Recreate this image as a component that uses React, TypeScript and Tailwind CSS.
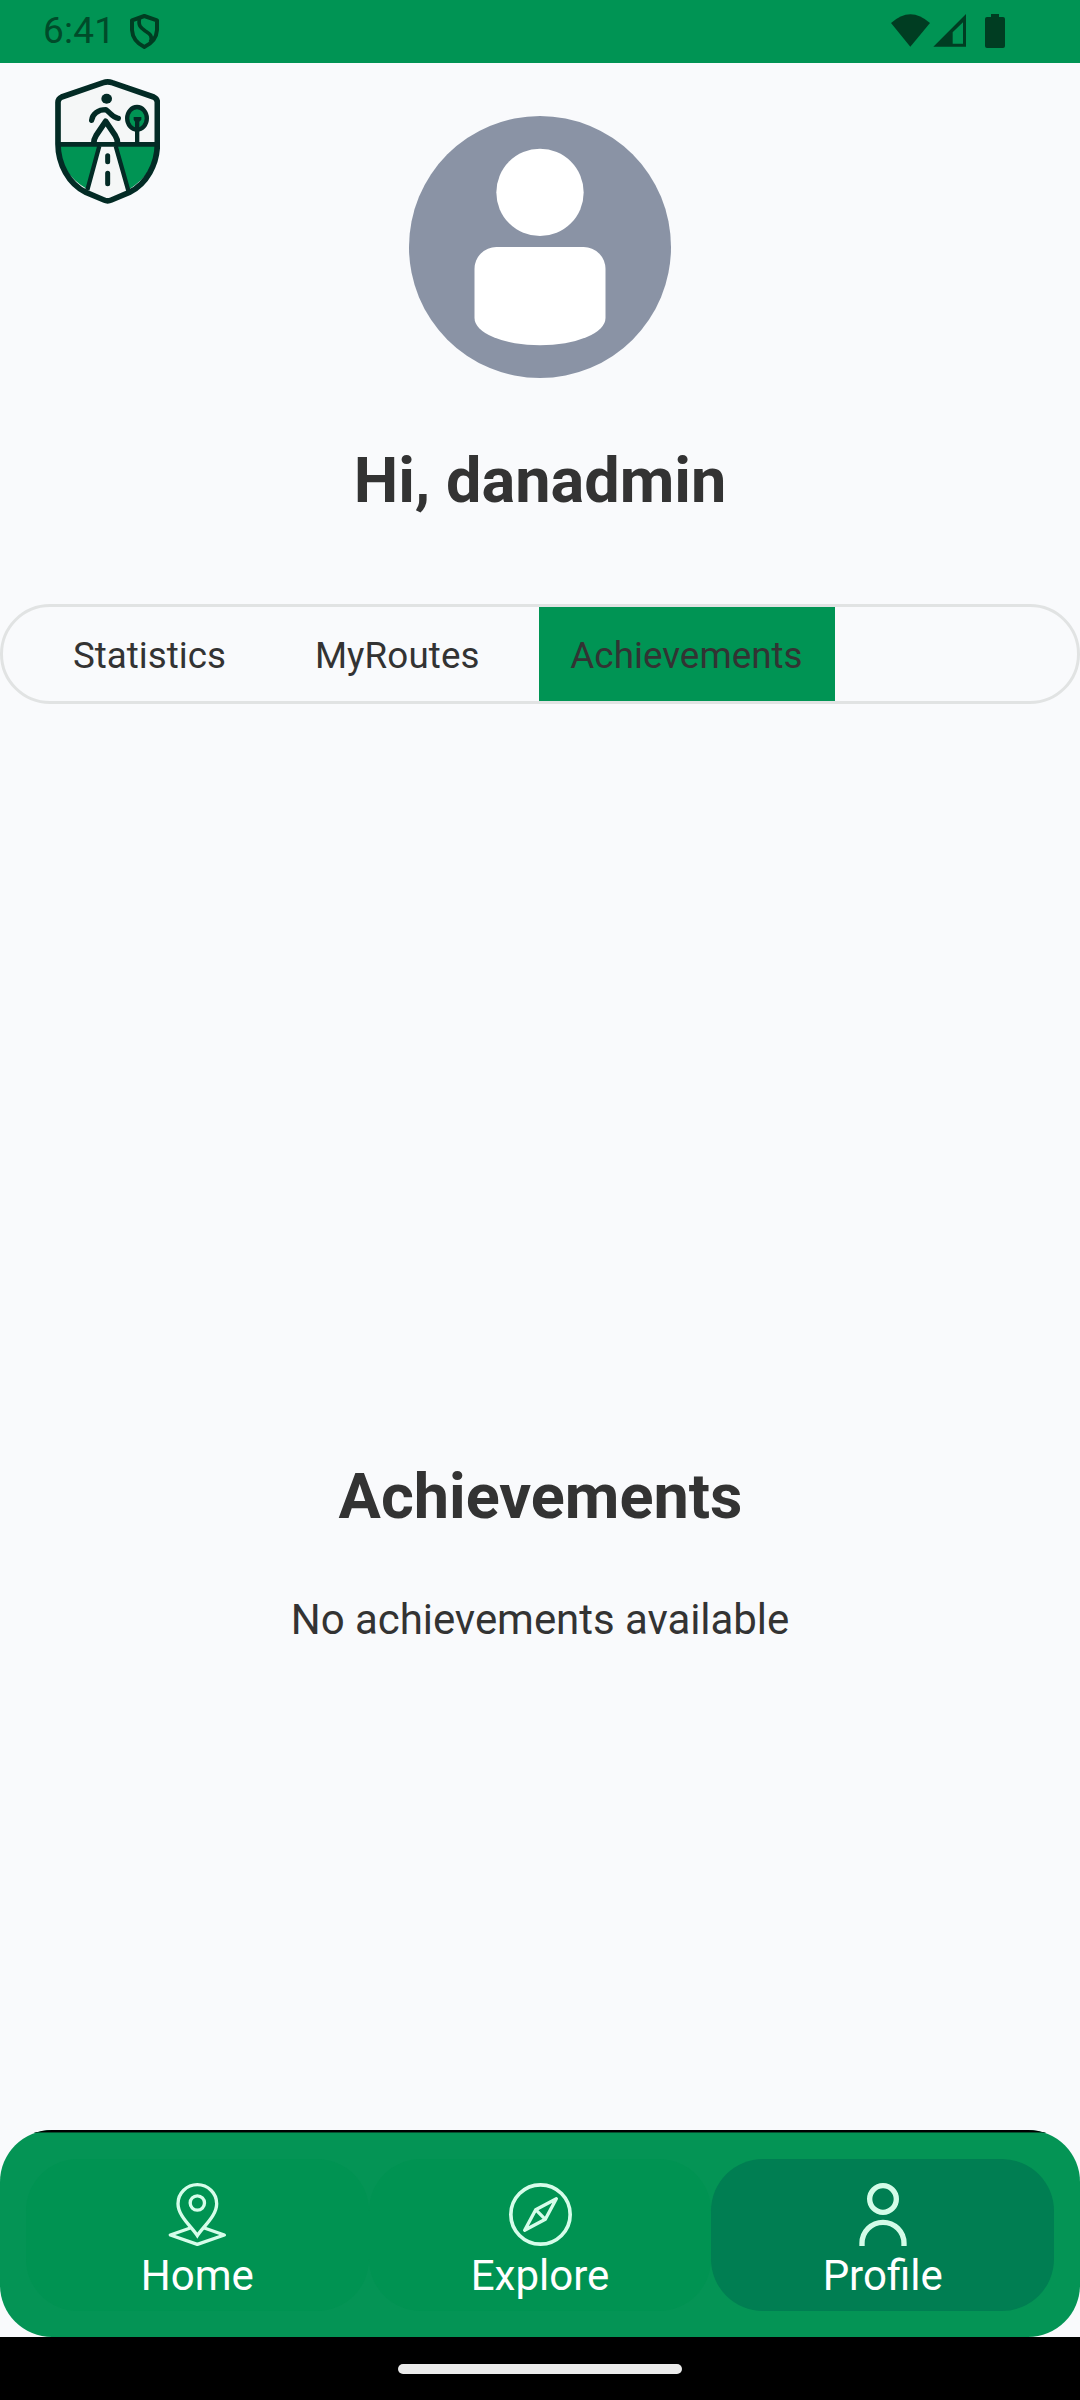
import React from "react";

function StatusBar() {
  return (
    <div className="flex h-[63px] shrink-0 items-start bg-[#009454] text-[#003d22]">
      <span className="ml-[43px] mt-[9px] w-[70px] text-[37px] leading-[44px] text-[#004b2a] tracking-[0.2px]">6:41</span>
      <svg className="ml-[16px] mt-[13px] h-[37px] w-[31px]" viewBox="387 39 93 111" fill="none" stroke="currentColor">
        <path strokeWidth="12" strokeLinejoin="round" d="M433 48 L471 61 V90 Q469 124 433 141 Q398 124 396 90 V61 Z" />
        <path strokeWidth="11" d="M419 52 C413 78 423 84 436 93 C452 103 458 109 451 126" />
      </svg>
      <div className="ml-auto mr-[75px] mt-[14px] flex h-[34px] w-[114px]">
        <svg className="h-[34px] w-[114px]" viewBox="153 42 342 102" fill="currentColor">
          <path d="M153 69 Q211 16 270 69 L211 140 Z" />
          <path fillRule="evenodd" d="M280 140 L378 42 V140 Z M338 97 V131 H369 V67 Z" />
          <path d="M453 42 H477 V51 H489 Q495 51 495 57 V138 Q495 144 489 144 H441 Q435 144 435 138 V57 Q435 51 441 51 H453 Z" />
        </svg>
      </div>
    </div>
  );
}

function Logo() {
  return (
    <svg className="ml-[55px] mt-[15px] h-[127px] w-[105px]" viewBox="165 234 315 381" fill="none">
      <path fill="#f5f7f7" d="M323 245 L462 291 Q472 296 472 306 V432 C472 510 420 572 323 604 C226 572 174 510 174 432 V306 Q174 296 184 291 Z" />
      <path fill="#009454" d="M176 436 H298 L262 568 Q180 520 176 436 Z M347 436 H470 Q466 520 384 570 Z" />
      <g stroke="#032b25" strokeWidth="17" strokeLinejoin="round" strokeLinecap="round">
        <path d="M310 248 Q323 243 336 248 L461 291 Q472 296 472 307 V432 C472 492 440 552 388 577 L334 600 Q323 605 312 600 L258 577 C206 552 174 492 174 432 V307 Q174 296 185 291 Z" />
        <path strokeWidth="14" d="M176 433 H470" />
        <path strokeWidth="13" strokeLinecap="butt" d="M298 438 L262 570 M347 438 L385 572" />
        <path strokeWidth="16" d="M275 361 C277 342 294 329 318 329 C332 338 334 352 355 355" />
        <path strokeWidth="17" strokeLinecap="butt" d="M281 431 Q281 418 288 407 L317 364 L346 407 Q353 418 353 431" />
        <path strokeWidth="15" d="M323 467 V485 M323 520 V551" />
      </g>
      <ellipse cx="320" cy="296" rx="16" ry="15" fill="#032b25" />
      <ellipse cx="411" cy="355" rx="29.500" ry="34" fill="#009454" stroke="#032b25" strokeWidth="13" />
      <path fill="#032b25" d="M401 351 H424 V359 L418 365 V431 H405 V365 L401 359 Z" />
    </svg>
  );
}

function Avatar() {
  return (
    <svg className="mt-[53px] h-[262px] w-[262px]" viewBox="0 0 24 24">
      <circle cx="12" cy="12" r="12" fill="#8a93a5" />
      <circle cx="12" cy="7" r="4" fill="#fff" />
      <path fill="#fff" d="M8 12 H16 A2 2 0 0 1 18 14 V18.5 A6 2.5 0 0 1 6 18.5 V14 A2 2 0 0 1 8 12 Z" />
    </svg>
  );
}

function Tabs() {
  return (
    <div className="flex h-[100px] w-full items-stretch overflow-hidden rounded-full border-[3px] border-[#e1e3e3] text-[36.75px]">
      <button className="ml-[39px] flex items-center px-[31px] pt-[3px] whitespace-nowrap">Statistics</button>
      <button className="ml-[27px] flex items-center px-[31px] pt-[3px] tracking-[0.1px] whitespace-nowrap">MyRoutes</button>
      <button className="ml-auto mr-[242px] flex w-[296px] items-center justify-center bg-[#009454] pt-[3px] pr-px tracking-[0.05px] whitespace-nowrap">Achievements</button>
    </div>
  );
}

function HomeIcon() {
  return (
    <svg className="h-[64px] w-[64px]" viewBox="496 216 192 192" fill="none" stroke="#d6fdea" strokeWidth="10">
      <path d="M593 377 C575 349 535 318 535 281 A58 57 0 0 1 651 281 C651 318 611 349 593 377 Z" />
      <circle cx="593" cy="279" r="21.5" />
      <path strokeLinejoin="round" d="M572 354 L512 375 L593 403 L674 375 L614 354" />
    </svg>
  );
}

function ExploreIcon() {
  return (
    <svg className="h-[64px] w-[64px]" viewBox="444 216 192 192" fill="none" stroke="#d6fdea" strokeWidth="10" strokeLinejoin="round">
      <circle cx="541.500" cy="313.500" r="89" strokeWidth="11" />
      <path d="M589 266 L527 299 L494 361 L556 328 Z M527 299 L556 328" />
    </svg>
  );
}

function ProfileIcon() {
  return (
    <svg className="h-[64px] w-[64px]" viewBox="482 216 192 192" fill="none" stroke="#d3fce8" strokeWidth="16">
      <circle cx="578" cy="267" r="40" />
      <path d="M515 408 V400 A63 63 0 0 1 641 400 V408" />
    </svg>
  );
}

const items = [
  { label: "Home", icon: <HomeIcon />, tone: "bg-[#009352]" },
  { label: "Explore", icon: <ExploreIcon />, tone: "bg-[#009352]" },
  { label: "Profile", icon: <ProfileIcon />, tone: "bg-[#007e52]" },
];

function BottomNav() {
  return (
    <nav className="h-[207px] w-full shrink-0 overflow-hidden rounded-[52px] bg-[#049455]">
      <div className="h-[3px] border-b border-[#05502f] bg-black" />
      <div className="mt-[26px] grid grid-cols-3 px-[26px]">
        {items.map((item) => (
          <button key={item.label} className={`flex h-[152px] flex-col items-center rounded-[52px] pt-[23px] text-white ${item.tone}`}>
            {item.icon}
            <span className="mt-[5px] text-[42px] leading-[49px]">{item.label}</span>
          </button>
        ))}
      </div>
    </nav>
  );
}

export default function App() {
  return (
    <div className="flex h-[2400px] w-[1080px] flex-col overflow-hidden bg-[#f9fafc] font-['Roboto',sans-serif] text-[#333333]">
      <StatusBar />
      <header className="grid shrink-0 grid-cols-[1fr_262px_1fr] items-start">
        <Logo />
        <Avatar />
      </header>
      <h1 className="mt-[66px] h-[74px] shrink-0 text-center text-[63px] leading-[74px] font-bold">Hi, danadmin</h1>
      <div className="mt-[86px] shrink-0">
        <Tabs />
      </div>
      <main className="flex flex-1 flex-col items-center pt-[756px]">
        <h2 className="pl-px text-[63px] leading-[74px] font-bold">Achievements</h2>
        <p className="mt-[61px] text-[42px] leading-[49px] tracking-[-0.05px]">No achievements available</p>
      </main>
      <BottomNav />
      <div className="flex h-[63px] shrink-0 items-start justify-center bg-black pt-[27px]">
        <div className="h-[10px] w-[284px] rounded-full bg-[#ebebeb]" />
      </div>
    </div>
  );
}
